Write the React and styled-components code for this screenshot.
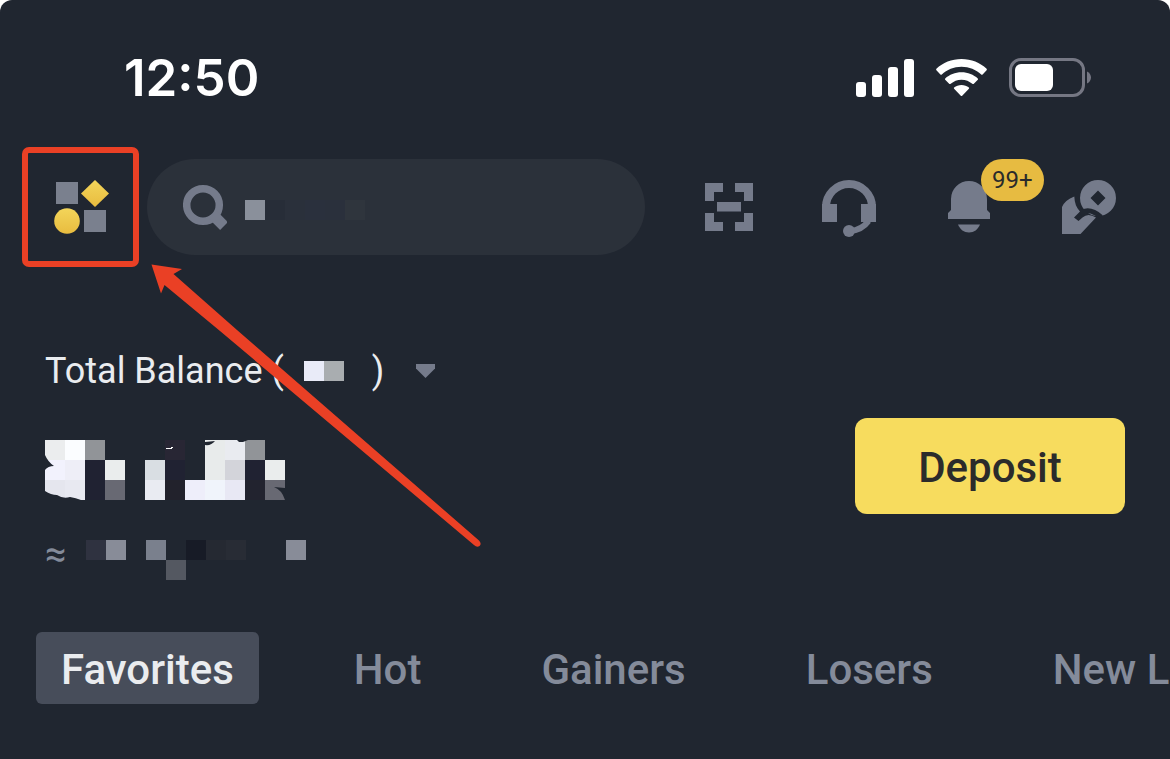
import React from 'react';
import styled, { createGlobalStyle } from 'styled-components';

const GlobalStyle = createGlobalStyle`
    * {
        box-sizing: border-box;
    }

    body {
        margin: 0;
        background: #ffffff;
        font-family: Roboto, 'Noto Sans', sans-serif;
    }

    button {
        margin: 0;
        padding: 0;
        border: 0;
        background: none;
        font-family: inherit;
        cursor: pointer;
    }

    svg {
        display: block;
    }
`

const Screen = styled.div`
    position: relative;
    min-height: 100vh;
    overflow: hidden;
    border-radius: 12px 12px 0 0;
    background: #202630;
    color: #eaecef;
`

const StatusBar = styled.div`
    display: flex;
    align-items: center;
    justify-content: space-between;
    padding: 48px 79px 39px 124px;
`

const Clock = styled.time`
    font-family: Inter, sans-serif;
    font-size: 51px;
    font-weight: 600;
    line-height: 60px;
    color: #ffffff;
`

const StatusIcons = styled.div`
    display: flex;
    align-items: center;
    gap: 22px;
`

const Header = styled.header`
    display: flex;
    align-items: center;
    gap: 8px;
    padding: 0 21px 0 22px;
`

const MenuButton = styled.button`
    display: flex;
    flex: none;
    align-items: center;
    justify-content: center;
    width: 117px;
    height: 120px;
    border: 6px solid #ea4025;
    border-radius: 7px;
`

const SearchBox = styled.label`
    display: flex;
    flex: 1;
    align-items: center;
    min-width: 0;
    height: 96px;
    margin-right: 16px;
    padding: 0 36px;
    gap: 18px;
    border-radius: 48px;
    background: #2b313a;
`

const SearchField = styled.div`
    display: grid;
    flex: 1;
    align-items: center;
    min-width: 0;
    padding-top: 6px;

    > * {
        grid-area: 1 / 1;
    }
`

const SearchInput = styled.input`
    width: 100%;
    border: 0;
    outline: 0;
    background: transparent;
    color: #848b9a;
    font-family: inherit;
    font-size: 36px;
`

const Actions = styled.nav`
    display: flex;
`

const IconButton = styled.button`
    position: relative;
    display: flex;
    align-items: center;
    justify-content: center;
    width: 120px;
    height: 96px;
    color: #757b8b;
`

const Badge = styled.span`
    position: absolute;
    top: 0;
    left: 72px;
    padding: 0 11px;
    border-radius: 21px;
    background: #e7bb41;
    color: #2b2b2b;
    font-family: Roboto, sans-serif;
    font-size: 24px;
    line-height: 42px;
`

const Balance = styled.section`
    padding: 82px 45px 0;
`

const BalanceLabel = styled.h2`
    display: flex;
    align-items: center;
    margin: 0;
    font-size: 36px;
    font-weight: 400;
    line-height: 44px;
    color: #eaecef;
`

const Currency = styled.span`
    padding: 0 8px 0 20px;
    margin-right: 20px;
`

const CaretButton = styled.button`
    display: flex;
    align-items: center;
    height: 40px;
    margin-left: 32px;
    color: #757b8b;
`

const BalanceRow = styled.div`
    display: flex;
    align-items: flex-start;
    justify-content: space-between;
    padding-top: 25px;
`

const Amounts = styled.div`
    padding-top: 22px;
`

const Approx = styled.div`
    display: flex;
    align-items: flex-start;
    gap: 20px;
    padding-top: 40px;
    font-size: 38px;
    line-height: 28px;
    color: #848b9a;
`

const DepositButton = styled.button`
    width: 270px;
    height: 96px;
    padding-top: 2px;
    border-radius: 12px;
    background: #f7dc5e;
    color: #2b2b2b;
    font-size: 42px;
    font-weight: 500;
`

const Tabs = styled.div`
    display: flex;
    gap: 70px;
    padding: 52px 0 0 36px;
    overflow: hidden;
`

const Tab = styled.button`
    flex: none;
    height: 72px;
    padding: 2px 25px 0;
    border-radius: 6px;
    background: ${props => props.$active ? '#474d5a' : 'transparent'};
    color: ${props => props.$active ? '#eaecef' : '#848b9a'};
    font-size: 42px;
    font-weight: 500;
    white-space: nowrap;
`

const Arrow = styled.svg`
    position: absolute;
    top: 264px;
    left: 151px;
    pointer-events: none;
`

// Each block is [column, row, color]
const CELL = 20;

const SEARCH_BLOCKS = [
    [0, 0, '#8a909b'], [1, 0, '#272d38'], [2, 0, '#2a303b'], [3, 0, '#2a303d'],
    [4, 0, '#2a303c'], [5, 0, '#2f353d']
]

const CURRENCY_BLOCKS = [
    [0, 0, '#e9ebf8'], [1, 0, '#a9adb0']
]

const AMOUNT_BLOCKS = [
    [0, 0, '#ebedee'], [1, 0, '#fbfdff'], [2, 0, '#919498'], [6, 0, '#282634'],
    [8, 0, '#e8ebeb'], [9, 0, '#e9ebf0'], [10, 0, '#919498'],
    [0, 1, '#f2f2fd'], [1, 1, '#eeeef7'], [2, 1, '#202232'], [3, 1, '#eaeded'],
    [5, 1, '#d9dee3'], [6, 1, '#202232'], [8, 1, '#e8ebeb'], [9, 1, '#d3d4da'],
    [10, 1, '#202232'], [11, 1, '#eaeded'],
    [0, 2, '#e5e6ee'], [1, 2, '#e8e9f1'], [2, 2, '#202232'], [3, 2, '#686973'],
    [5, 2, '#e9ebf2'], [6, 2, '#22222c'], [7, 2, '#eeeefa'], [8, 2, '#f0f4fb'],
    [9, 2, '#e8e8f4'], [10, 2, '#22232f'], [11, 2, '#686973']
]

const FIAT_BLOCKS = [
    [0, 0, '#2f3240'], [1, 0, '#888c98'], [3, 0, '#7a808d'], [5, 0, '#171b26'],
    [6, 0, '#252932'], [7, 0, '#282c35'], [10, 0, '#888c98'], [4, 1, '#545861']
]

const Mosaic = ({ blocks, columns, rows, children }) => (
    <svg width={columns * CELL} height={rows * CELL} shapeRendering="crispEdges" aria-hidden="true">
        {blocks.map(([column, row, color]) => (
            <rect key={`${column}-${row}`} x={column * CELL} y={row * CELL} width={CELL} height={CELL} fill={color} />
        ))}
        {children}
    </svg>
)

const SignalIcon = () => (
    <svg width="58" height="38" viewBox="0 0 58 38" fill="#ffffff">
        <rect x="0" y="23" width="10" height="15" rx="3" />
        <rect x="16" y="16" width="10" height="22" rx="3" />
        <rect x="32" y="8" width="10" height="30" rx="3" />
        <rect x="48" y="0" width="10" height="38" rx="3" />
    </svg>
)

const WifiIcon = () => (
    <svg width="51" height="38" viewBox="0 0 51 38" fill="#ffffff">
        <path d="M25.500 0C35.300 0 44.200 3.600 50.600 9.800Q51.200 10.600 50.600 11.300L46.600 15.500Q45.800 16 45.200 15.500C40 10.600 33.200 7.700 25.500 7.700S11 10.600 5.800 15.500Q5.200 16 4.400 15.500L.4 11.300Q-.2 10.600 .4 9.800C6.800 3.600 15.700 0 25.500 0Z" />
        <path d="M25.500 13.200C31.900 13.200 37.600 15.600 41.800 19.400Q42.300 20 41.800 20.700L37.600 24.900Q36.900 25.300 36.300 24.800C33.400 22.300 29.700 20.700 25.500 20.700S17.600 22.300 14.700 24.800Q14.100 25.300 13.400 24.900L9.200 20.700Q8.700 20 9.200 19.400C13.400 15.600 19.100 13.200 25.500 13.200Z" />
        <path d="M25.500 26C28.300 26 30.900 27 32.900 28.500Q33.500 29.100 32.900 29.700L26.200 36.700Q25.500 37.300 24.800 36.700L18.100 29.700Q17.500 29.100 18.100 28.500C20.100 27 22.700 26 25.500 26Z" />
    </svg>
)

const BatteryIcon = () => (
    <svg width="82" height="40" viewBox="0 0 82 40">
        <rect x="1.500" y="1.500" width="73" height="36" rx="10.500" fill="none" stroke="#757783" strokeWidth="3" />
        <rect x="6" y="6" width="38" height="27" rx="6" fill="#ffffff" />
        <path d="M78 13.500C80.500 14.500 82 17 82 19.500S80.500 24.500 78 25.500Z" fill="#757783" />
    </svg>
)

const MenuIcon = () => (
    <svg width="57" height="55" viewBox="-2 0 57 55">
        <defs>
            <linearGradient id="menuGold" x1="0" y1="0" x2="0" y2="1">
                <stop offset="0" stopColor="#f3d55a" />
                <stop offset="1" stopColor="#e8bc3f" />
            </linearGradient>
        </defs>
        <rect x="2" y="2" width="22" height="22" fill="#7a808e" />
        <rect x="30" y="30" width="22" height="22" fill="#7a808e" />
        <path d="M41 0L55 13.500L41 27L27 13.500Z" fill="url(#menuGold)" />
        <circle cx="13" cy="41" r="12.800" fill="url(#menuGold)" />
    </svg>
)

const SearchIcon = () => (
    <svg width="44" height="46" viewBox="0 0 44 46" fill="none" stroke="#757b8b">
        <circle cx="20" cy="21" r="16.300" strokeWidth="7.500" />
        <path d="M30 31L41 42" strokeWidth="11" />
    </svg>
)

const ScanIcon = () => (
    <svg width="48" height="48" viewBox="0 0 48 48" fill="currentColor">
        <path d="M0 0H18V9H9V18H0ZM30 0H48V18H39V9H30ZM0 30H9V39H18V48H0ZM39 30H48V48H30V39H39ZM12 19H36V28.500H12Z" />
    </svg>
)

const HeadsetIcon = () => (
    <svg width="54" height="60" viewBox="0 -3 54 60">
        <path d="M4 28V27A23 23 0 0 1 50 27V28" fill="none" stroke="currentColor" strokeWidth="8" />
        <path d="M0 24H15V42H0ZM39 24H54V42H39Z" fill="currentColor" />
        <path d="M46.500 41Q40 50 28 51" fill="none" stroke="currentColor" strokeWidth="6" />
        <circle cx="27" cy="51" r="6" fill="currentColor" />
    </svg>
)

const BellIcon = () => (
    <svg width="42" height="52" viewBox="0 0 42 52" fill="currentColor">
        <path d="M3 18A18 18 0 0 1 39 18V29L42 32V38H0V32L3 29Z" />
        <path d="M10 43.500H32C30 48.500 26 51.500 21 51.500S12 48.500 10 43.500Z" />
    </svg>
)

const HandCoinIcon = () => (
    <svg width="54" height="54" viewBox="0 0 54 54" fill="currentColor">
        <path fillRule="evenodd" d="M36 0A18 18 0 1 1 36 36A18 18 0 1 1 36 0ZM36 10.500L28.500 18L36 25.500L43.500 18Z" />
        <path d="M18 33Q28 27 39 37" fill="none" stroke="#202630" strokeWidth="5" />
        <path d="M12.300 16.500C12.500 23 14.500 28 18 31.500L12 37.500L16.500 41L20.500 37.500Q26 32.500 34 37.500L18.500 54H0V27Q3 20 12.300 16.500Z" />
    </svg>
)

const TABS = ['Favorites', 'Hot', 'Gainers', 'Losers', 'New Listings']

class App extends React.Component
{
    state = {
        tab: 'Favorites',
        search: ''
    }

    render() {
        return (
            <Screen>
                <GlobalStyle />
                <StatusBar>
                    <Clock>12:50</Clock>
                    <StatusIcons>
                        <SignalIcon />
                        <WifiIcon />
                        <BatteryIcon />
                    </StatusIcons>
                </StatusBar>

                <Header>
                    <MenuButton aria-label="Menu">
                        <MenuIcon />
                    </MenuButton>
                    <SearchBox>
                        <SearchIcon />
                        <SearchField>
                            {this.state.search === '' && <Mosaic blocks={SEARCH_BLOCKS} columns={6} rows={1} />}
                            <SearchInput
                                aria-label="Search"
                                value={this.state.search}
                                onChange={event => {this.setState({search: event.target.value})}}
                            />
                        </SearchField>
                    </SearchBox>
                    <Actions>
                        <IconButton aria-label="Scan"><ScanIcon /></IconButton>
                        <IconButton aria-label="Support"><HeadsetIcon /></IconButton>
                        <IconButton aria-label="Notifications">
                            <BellIcon />
                            <Badge>99+</Badge>
                        </IconButton>
                        <IconButton aria-label="Pay"><HandCoinIcon /></IconButton>
                    </Actions>
                </Header>

                <Balance>
                    <BalanceLabel>
                        Total Balance (
                        <Currency>
                            <Mosaic blocks={CURRENCY_BLOCKS} columns={2} rows={1} />
                        </Currency>
                        )
                        <CaretButton aria-label="Change currency">
                            <svg width="19" height="14" viewBox="0 0 19 14" fill="currentColor">
                                <path d="M0 0H19V4.500L9.500 14L0 4.500Z" />
                            </svg>
                        </CaretButton>
                    </BalanceLabel>
                    <BalanceRow>
                        <Amounts>
                            <Mosaic blocks={AMOUNT_BLOCKS} columns={12} rows={3}>
                                <g fill="#202630" shapeRendering="auto">
                                    <path d="M0 15Q3 22 9 26Q3 26 0 30Z" />
                                    <path d="M0 51Q6 55 12 55Q18 59 25 57Q31 58 36 60H0Z" />
                                    <path d="M160 2L170 1Q166 6 160 5ZM192 0H203L198 2H194Z" />
                                    <path d="M229 47Q237 50 240 60V48Z" />
                                </g>
                                <path d="M118 9L128 7L127 9Z" fill="#ffffff" />
                            </Mosaic>
                            <Approx>
                                ≈
                                <Mosaic blocks={FIAT_BLOCKS} columns={11} rows={2} />
                            </Approx>
                        </Amounts>
                        <DepositButton>Deposit</DepositButton>
                    </BalanceRow>
                </Balance>

                <Tabs role="tablist">
                    {TABS.map(tab => (
                        <Tab
                            key={tab}
                            role="tab"
                            aria-selected={tab === this.state.tab}
                            $active={tab === this.state.tab}
                            onClick={() => {this.setState({tab})}}
                        >
                            {tab}
                        </Tab>
                    ))}
                </Tabs>

                <Arrow width="332" height="284" viewBox="0 0 332 284" fill="#ea4025" aria-hidden="true">
                    <path d="M0.500 0.500L31 5L22.500 10L86 66L328 276.500Q331 280 328.500 282Q326 284 323 281L69 67L13.500 21L10 29.500Z" />
                </Arrow>
            </Screen>
        )
    }
}

export default App;
